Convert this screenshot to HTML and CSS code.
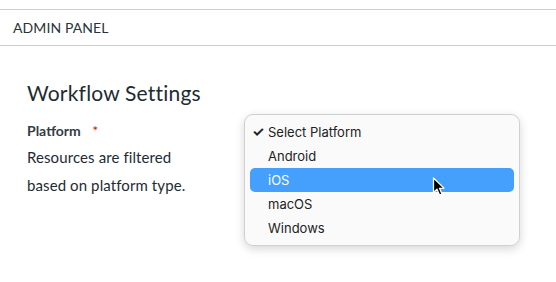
FILE: index.html
```html
<!DOCTYPE html>
<html>
<head>
<meta charset="utf-8">
<link rel="stylesheet" href="styles.css">
</head>
<body>
<div class="page">
  <header class="header">ADMIN PANEL</header>
  <main class="content">
    <h1 class="title">Workflow Settings</h1>
    <div class="form-row">
      <div class="label-col">
        <div class="label">Platform <span class="req">*</span></div>
        <p class="help">Resources are filtered<br>based on platform type.</p>
      </div>
      <div class="select-col">
        <div class="ghost-select"></div>
        <ul class="menu">
          <li class="item checked"><span class="check">✓</span>Select Platform</li>
          <li class="item">Android</li>
          <li class="item active">iOS</li>
          <li class="item">macOS</li>
          <li class="item">Windows</li>
        </ul>
        <svg class="cursor" width="14" height="20" viewBox="0 0 14 20">
          <path d="M1.5 1 L1.5 15.5 L5 12.2 L7.6 18.2 L10 17.1 L7.5 11.3 L12 11.1 Z" fill="#000" stroke="#fff" stroke-width="1.3" stroke-linejoin="round"/>
        </svg>
      </div>
    </div>
  </main>
</div>
</body>
</html>
```
FILE: styles.css
```css
html, body {
  margin: 0;
  padding: 0;
  background: #ffffff;
}
body {
  font-family: "Lato", "Open Sans", sans-serif;
  color: #1f2a33;
  width: 556px;
  height: 282px;
  overflow: hidden;
}
.page {
  padding-top: 9px;
}
.header {
  border-top: 1px solid #c9cfd4;
  border-bottom: 1px solid #c9cfd4;
  height: 37px;
  box-sizing: border-box;
  padding: 11px 0 0 13px;
  font-size: 14px;
  letter-spacing: 0.1px;
  color: #2b3338;
  line-height: 14px;
}
.content {
  padding: 35px 0 0 27px;
}
.title {
  margin: 0;
  font-weight: 400;
  font-size: 21px;
  line-height: 24px;
  color: #1f2a33;
  letter-spacing: 0.2px;
}
.form-row {
  display: flex;
  margin-top: 18px;
}
.label-col {
  width: 217px;
}
.label {
  font-size: 14px;
  font-weight: 700;
  color: #333d45;
  line-height: 16px;
}
.req {
  color: #c21d00;
  margin-left: 8px;
  font-weight: 400;
}
.help {
  margin: 4px 0 0;
  font-size: 15px;
  line-height: 28px;
  color: #1f2a33;
  letter-spacing: 0.1px;
}
.select-col {
  position: relative;
  margin-top: -9px;
}
.ghost-select {
  position: absolute;
  left: 6px;
  top: 4px;
  width: 262px;
  height: 30px;
  border-radius: 6px;
  box-shadow: 0 0 6px rgba(160, 200, 230, 0.35);
}
.menu {
  position: relative;
  list-style: none;
  margin: 0;
  padding: 5px 5px;
  width: 276px;
  box-sizing: border-box;
  background: rgba(250, 250, 250, 0.92);
  border: 1px solid #d0d0d0;
  border-radius: 9px;
  box-shadow: 0 3px 10px rgba(0, 0, 0, 0.16);
  font-family: "Inter", "Liberation Sans", sans-serif;
  font-size: 13px;
  color: #222;
}
.item {
  height: 24px;
  line-height: 24px;
  padding-left: 18px;
  border-radius: 5px;
  position: relative;
}
.check {
  position: absolute;
  left: 2px;
  font-size: 14px;
  font-weight: 700;
}
.active {
  background: #459ffc;
  color: #fff;
}
.cursor {
  position: absolute;
  left: 188px;
  top: 63px;
}
```
